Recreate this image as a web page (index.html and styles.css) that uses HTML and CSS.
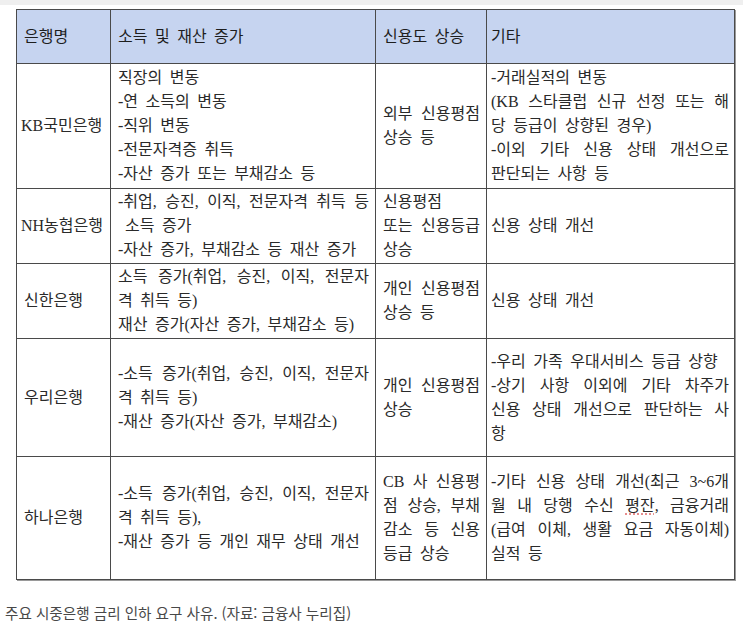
FILE: index.html
```html
<!DOCTYPE html>
<html lang="ko">
<head>
<meta charset="utf-8">
<title>주요 시중은행 금리 인하 요구 사유</title>
<link rel="stylesheet" href="styles.css">
</head>
<body>
<div class="topbar"></div>
<table class="rates">
  <colgroup>
    <col class="c1"><col class="c2"><col class="c3"><col class="c4">
  </colgroup>
  <thead>
    <tr class="r-head">
      <th class="bank">은행명</th>
      <th class="cell">소득 및 재산 증가</th>
      <th class="cell">신용도 상승</th>
      <th class="cell etc">기타</th>
    </tr>
  </thead>
  <tbody>
    <tr class="r-kb">
      <td class="bank"><span class="wide">KB국민은행</span></td>
      <td class="cell">
        <span class="ln">직장의 변동</span>
        <span class="ln">-연 소득의 변동</span>
        <span class="ln">-직위 변동</span>
        <span class="ln">-전문자격증 취득</span>
        <span class="ln">-자산 증가 또는 부채감소 등</span>
      </td>
      <td class="cell">
        <span class="j">외부 신용평점</span>
        <span class="ln">상승 등</span>
      </td>
      <td class="cell etc">
        <span class="ln">-거래실적의 변동</span>
        <span class="j">(KB 스타클럽 신규 선정 또는 해</span>
        <span class="ln">당 등급이 상향된 경우)</span>
        <span class="j">-이외 기타 신용 상태 개선으로</span>
        <span class="ln">판단되는 사항 등</span>
      </td>
    </tr>
    <tr class="r-nh">
      <td class="bank"><span class="wide">NH농협은행</span></td>
      <td class="cell">
        <span class="j">-취업, 승진, 이직, 전문자격 취득 등</span>
        <span class="ln indent">소득 증가</span>
        <span class="ln">-자산 증가, 부채감소 등 재산 증가</span>
      </td>
      <td class="cell">
        <span class="ln">신용평점</span>
        <span class="j">또는 신용등급</span>
        <span class="ln">상승</span>
      </td>
      <td class="cell etc">
        <span class="ln">신용 상태 개선</span>
      </td>
    </tr>
    <tr class="r-sh">
      <td class="bank">신한은행</td>
      <td class="cell">
        <span class="j">소득 증가(취업, 승진, 이직, 전문자</span>
        <span class="ln">격 취득 등)</span>
        <span class="ln">재산 증가(자산 증가, 부채감소 등)</span>
      </td>
      <td class="cell">
        <span class="j">개인 신용평점</span>
        <span class="ln">상승 등</span>
      </td>
      <td class="cell etc">
        <span class="ln">신용 상태 개선</span>
      </td>
    </tr>
    <tr class="r-wr">
      <td class="bank">우리은행</td>
      <td class="cell">
        <span class="j">-소득 증가(취업, 승진, 이직, 전문자</span>
        <span class="ln">격 취득 등)</span>
        <span class="ln">-재산 증가(자산 증가, 부채감소)</span>
      </td>
      <td class="cell">
        <span class="j">개인 신용평점</span>
        <span class="ln">상승</span>
      </td>
      <td class="cell etc">
        <span class="ln">-우리 가족 우대서비스 등급 상향</span>
        <span class="j">-상기 사항 이외에 기타 차주가</span>
        <span class="j">신용 상태 개선으로 판단하는 사</span>
        <span class="ln">항</span>
      </td>
    </tr>
    <tr class="r-hn">
      <td class="bank">하나은행</td>
      <td class="cell">
        <span class="j">-소득 증가(취업, 승진, 이직, 전문자</span>
        <span class="ln">격 취득 등),</span>
        <span class="ln">-재산 증가 등 개인 재무 상태 개선</span>
      </td>
      <td class="cell">
        <span class="j">CB 사 신용평</span>
        <span class="j">점 상승, 부채</span>
        <span class="j">감소 등 신용</span>
        <span class="ln">등급 상승</span>
      </td>
      <td class="cell etc">
        <span class="j">-기타 신용 상태 개선(최근 3~6개</span>
        <span class="j">월 내 당행 수신 <span class="spell">평잔</span>, 금융거래</span>
        <span class="j">(급여 이체, 생활 요금 자동이체)</span>
        <span class="ln">실적 등</span>
      </td>
    </tr>
  </tbody>
</table>
<p class="caption">주요 시중은행 금리 인하 요구 사유. (자료: 금융사 누리집)</p>
</body>
</html>
```

FILE: styles.css
```css
html, body {
  margin: 0;
  padding: 0;
  background: #ffffff;
}

.topbar {
  height: 5px;
  background: #efefef;
}

.rates {
  margin: 4px 0 0 16px;
  width: 718px;
  table-layout: fixed;
  border-collapse: collapse;
  border: 1px solid #555;
  box-shadow: 1px 1px 0 #9a9a9a;
  font-family: "Liberation Serif", "Noto Sans CJK KR", serif;
  font-size: 16px;
  line-height: 24px;
  color: #2a2a2a;
}

.c1 { width: 94px; }
.c2 { width: 265px; }
.c3 { width: 111px; }
.c4 { width: 248px; }

.rates th,
.rates td {
  border: 1px solid #4a4a4a;
  vertical-align: middle;
  text-align: left;
  font-weight: normal;
  padding: 0 6px 0 7px;
}

.rates thead th {
  background: #c6d4f0;
  color: #1e1e1e;
  word-spacing: 3.5px;
}

.rates .bank {
  padding-left: 7px;
  padding-right: 2px;
  white-space: nowrap;
}

.rates .bank .wide {
  margin-left: -3px;
}

.rates .etc {
  padding-left: 4px;
  padding-right: 5px;
}

.r-head { height: 54px; }
.r-kb { height: 125px; }
.r-nh { height: 75px; }
.r-sh { height: 75px; }
.r-wr { height: 118px; }
.r-hn { height: 123px; }

.ln {
  display: block;
  white-space: nowrap;
  word-spacing: 3.5px;
}

.j {
  display: block;
  text-align: justify;
  text-align-last: justify;
}

.indent {
  padding-left: 7px;
}

.spell {
  text-decoration: underline dotted #e07070;
  text-underline-offset: 3px;
}

.caption {
  margin: 23px 0 0 5px;
  font-family: "Noto Sans CJK KR", "Noto Sans", sans-serif;
  font-size: 14.6px;
  line-height: 20px;
  color: #484848;
}
```
